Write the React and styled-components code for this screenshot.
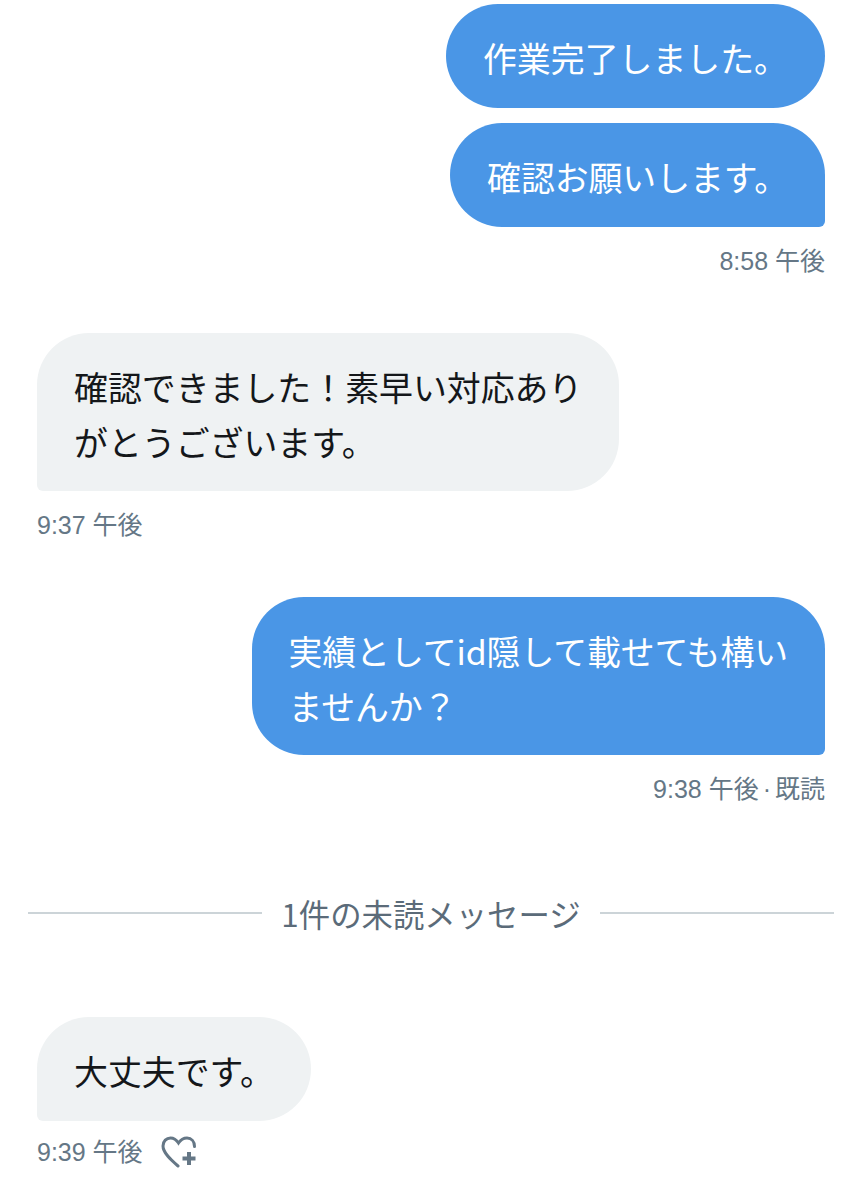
import React from "react";
import styled, { createGlobalStyle } from "styled-components";

const Global = createGlobalStyle`
  html, body { margin: 0; padding: 0; background: #fff; }
`;

const Page = styled.div`
  width: 848px;
  height: 1200px;
  overflow: hidden;
  padding-top: 4px;
  box-sizing: border-box;
  display: flex;
  flex-direction: column;
  font-family: "Noto Sans CJK JP", "Liberation Sans", sans-serif;
  font-weight: 400;
`;

const Group = styled.div`
  display: flex;
  flex-direction: column;
  align-items: ${(p) => (p.$mine ? "flex-end" : "flex-start")};
  padding: ${(p) => (p.$mine ? "0 23px 0 0" : "0 0 0 37px")};
  margin-top: ${(p) => p.$top || 0}px;
`;

const Bubble = styled.div`
  box-sizing: border-box;
  min-height: 104px;
  padding: 26px 37px 22px;
  margin-top: ${(p) => p.$top || 0}px;
  font-size: 33.9px;
  line-height: 55px;
  white-space: nowrap;
  letter-spacing: ${(p) => p.$spacing || 0}px;
  color: ${(p) => (p.$mine ? "#ffffff" : "#14171a")};
  background: ${(p) => (p.$mine ? "#4a96e6" : "#eff2f3")};
  border-radius: ${(p) =>
    p.$tail ? (p.$mine ? "52px 52px 6px 52px" : "52px 52px 52px 6px") : "52px"};
`;

const Meta = styled.div`
  display: flex;
  align-items: center;
  white-space: pre;
  margin-top: ${(p) => p.$top || 20}px;
  font-size: 25px;
  line-height: 28px;
  color: #657786;
  font-family: "Liberation Sans", "Noto Sans CJK JP", sans-serif;
`;

const Dot = styled.span`
  margin: 0 4px;
`;

const LikeIcon = styled.svg`
  width: 36px;
  height: 32px;
  margin-left: 18px;
  color: #657786;
`;

const Divider = styled.div`
  display: flex;
  align-items: center;
  gap: 19px;
  margin: 89px 14px 0 28px;
  font-size: 31.4px;
  line-height: 44px;
  color: #5b6b79;
  white-space: nowrap;
`;

const Rule = styled.div`
  flex: 1;
  height: 2px;
  background: #ccd4d8;
  transform: translateY(-1px);
`;

const messages = [
  { id: "a", mine: true, bubbles: [
    { text: ["作業完了しました。"] },
    { text: ["確認お願いします。"], tail: true, top: 15, spacing: -0.08 },
  ], meta: "8:58 午後" },
  { id: "b", top: 58, bubbles: [
    { text: ["確認できました！素早い対応あり", "がとうございます。"], tail: true },
  ], meta: "9:37 午後" },
  { id: "c", mine: true, top: 58, bubbles: [
    { text: ["実績としてid隠して載せても構い", "ませんか？"], tail: true, spacing: -0.1 },
  ], meta: "9:38 午後", read: "既読" },
];

function Message({ mine, top, bubbles, meta, read }) {
  return (
    <Group $mine={mine} $top={top}>
      {bubbles.map((b, i) => (
        <Bubble key={i} $mine={mine} $tail={b.tail} $top={b.top} $spacing={b.spacing}>
          {b.text.map((line, j) => (
            <React.Fragment key={j}>
              {j > 0 && <br />}
              {line}
            </React.Fragment>
          ))}
        </Bubble>
      ))}
      <Meta>
        {meta}
        {read && <Dot>·</Dot>}
        {read}
      </Meta>
    </Group>
  );
}

export default function App() {
  return (
    <Page>
      <Global />
      {messages.map(({ id, ...m }) => (
        <Message key={id} {...m} />
      ))}
      <Divider>
        <Rule />
        <span>1件の未読メッセージ</span>
        <Rule />
      </Divider>
      <Group $top={81}>
        <Bubble $tail>大丈夫です。</Bubble>
        <Meta $top={15}>
          9:39 午後
          <LikeIcon viewBox="0 0 36 32" fill="none" stroke="currentColor">
            <path
              d="M17 30 C10 24 2 17 2 10 C2 5 5.500 2 9.500 2 C13 2 15.500 4 17.500 7 C19.500 4 22 2 26 2 C30.500 2 33.500 5.500 33.500 10.500"
              strokeWidth="3"
              strokeLinecap="round"
            />
            <path d="M28 16 V29 M21.500 22.500 H34.500" strokeWidth="4" />
          </LikeIcon>
        </Meta>
      </Group>
    </Page>
  );
}
